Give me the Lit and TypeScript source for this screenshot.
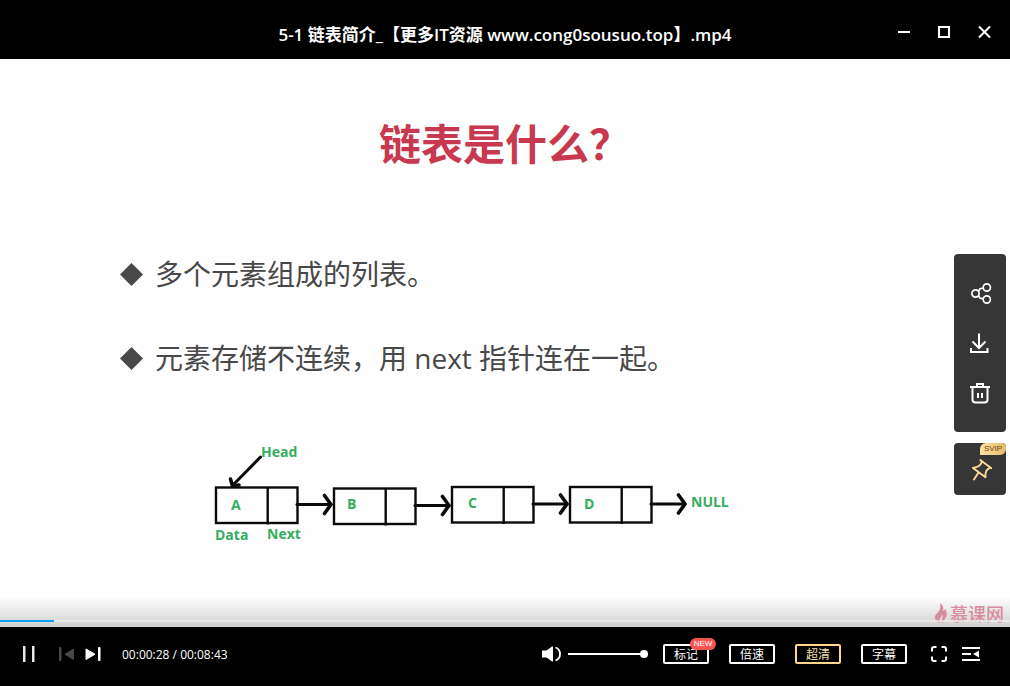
import { LitElement, html, css, svg } from "lit";
import { customElement, property, state } from "lit/decorators.js";

interface ListNode {
  label: string;
  x: number;
  y: number;
  labelX: number;
  labelY: number;
}

const NODES: ListNode[] = [
  { label: "A", x: 216, y: 487.5, labelX: 231, labelY: 510 },
  { label: "B", x: 334, y: 488.5, labelX: 347, labelY: 509 },
  { label: "C", x: 452, y: 487, labelX: 468, labelY: 508 },
  { label: "D", x: 570, y: 487, labelX: 584, labelY: 509 },
];

@customElement("linked-list-diagram")
class LinkedListDiagram extends LitElement {
  static styles = css`
    :host {
      display: block;
    }
    svg {
      display: block;
    }
    .line {
      fill: none;
      stroke: #0a0a0a;
      stroke-width: 2.4;
    }
    .arrow {
      fill: none;
      stroke: #0a0a0a;
      stroke-width: 3;
      stroke-linecap: round;
      stroke-linejoin: round;
    }
    .tip {
      stroke-width: 3.6;
    }
    text {
      font: 700 14px "Open Sans", "Noto Sans", sans-serif;
      fill: #34ad60;
    }
  `;

  render() {
    return html`
      <svg width="540" height="110" viewBox="200 440 540 110" role="img" aria-label="A → B → C → D → NULL">
        ${NODES.map(
          (n) => svg`
            <rect class="line" x=${n.x} y=${n.y} width="81.5" height="35.5" />
            <path class="line" d="M${n.x + 51.7} ${n.y}v37" />
            <path class="arrow" d="M${n.x + 81} ${n.y + 17}h34" />
            <path class="arrow tip" d="M${n.x + 108.5} ${n.y + 8}l6.500 9-6.500 9" />
            <text x=${n.labelX} y=${n.labelY}>${n.label}</text>
          `
        )}
        <path class="arrow" d="M260.500 457 234 484" />
        <path class="arrow tip" d="M230.500 479l2 7 6.500-1" />
        <text x="261" y="457">Head</text>
        <text x="215" y="540">Data</text>
        <text x="267" y="539">Next</text>
        <text x="691" y="507">NULL</text>
      </svg>
    `;
  }
}

@customElement("side-tools")
class SideTools extends LitElement {
  static styles = css`
    :host {
      display: flex;
      flex-direction: column;
      gap: 11px;
      width: 52px;
    }
    .group {
      display: flex;
      flex-direction: column;
      padding: 14px 0;
      border-radius: 4px;
      background: #363636;
    }
    button {
      display: grid;
      place-items: center;
      height: 50px;
      padding: 0;
      border: 0;
      background: none;
      color: #fff;
      cursor: pointer;
    }
    svg {
      display: block;
      fill: none;
      stroke: currentColor;
      stroke-width: 1.7;
    }
    .pin {
      position: relative;
      height: 52px;
      border-radius: 4px;
      background: #363636;
      color: #fddb96;
    }
    .svip {
      position: absolute;
      top: 0;
      right: 0;
      width: 26px;
      border-radius: 6px 4px 6px 0;
      background: linear-gradient(90deg, #fde3a6, #e8b968);
      color: #6b4312;
      font: 8px/12px "Liberation Sans", sans-serif;
      text-align: center;
    }
  `;

  render() {
    return html`
      <div class="group">
        <button aria-label="分享">
          <svg width="24" height="24" viewBox="0 0 24 24">
            <circle cx="7.500" cy="12.500" r="3.600" />
            <circle cx="18.800" cy="6.500" r="3.600" />
            <circle cx="18.800" cy="18.500" r="3.600" />
            <path d="M10.300 10.500 12 7.700l3.300-.700M10.300 14.500l1.700 2.600 3.300.700" />
          </svg>
        </button>
        <button aria-label="下载">
          <svg width="24" height="24" viewBox="0 0 24 24">
            <path stroke-width="2" d="M11 2.500v14M4.500 10.500l6.500 6.500 6.500-6.500M3 17v4h16.500v-4" />
          </svg>
        </button>
        <button aria-label="删除">
          <svg width="24" height="24" viewBox="0 0 24 24">
            <path stroke-width="2" d="M2 6h20M9 6V3h6v3M4.500 6v12.500a3 3 0 0 0 3 3h9a3 3 0 0 0 3-3V6M10 12v5M14 12v5" />
          </svg>
        </button>
      </div>
      <button class="pin" aria-label="置顶">
        <svg width="24" height="24" viewBox="0 0 24 24">
          <path stroke-width="1.900" d="m12.300 3 11 8.200M13.500 4.500c.300 3.500-3.500 5.500-8.500 6.500l12.500 9.300c-.500-4.500.500-8 4.500-9.500M10.500 15.500 6 22.500" stroke-linecap="round" stroke-linejoin="round" />
        </svg>
        <span class="svip">SVIP</span>
      </button>
    `;
  }
}

@customElement("app-root")
class AppRoot extends LitElement {
  @property({ type: Number }) duration = 523;
  @state() private position = 28;
  @state() private volume = 100;

  static styles = css`
    :host {
      display: flex;
      flex-direction: column;
      min-height: 100vh;
      background: #000;
      color: #fff;
      font: 12px/16px "Open Sans", "Noto Sans CJK SC", sans-serif;
    }
    button {
      display: grid;
      place-items: center;
      padding: 0;
      border: 0;
      background: none;
      color: inherit;
      font: inherit;
      cursor: pointer;
    }
    svg {
      display: block;
    }
    .titlebar {
      display: grid;
      grid-template-columns: 1fr auto 1fr;
      align-items: center;
      height: 59px;
      padding: 0 6px;
      box-sizing: border-box;
    }
    .name {
      grid-column: 2;
      margin: 0;
      padding-top: 11px;
      font-size: 17px;
      line-height: 24px;
      font-weight: 600;
      white-space: nowrap;
    }
    .window {
      display: flex;
      justify-content: flex-end;
      padding-top: 5px;
    }
    .window button {
      width: 40px;
      height: 24px;
    }
    .stage {
      position: relative;
      flex: 1;
      background: #fefefe;
      color: #484848;
    }
    .slide {
      padding-top: 57px;
    }
    .slide h2 {
      margin: 0;
      color: #c8384f;
      font-size: 42px;
      line-height: 56px;
      font-weight: 700;
      text-align: center;
    }
    .slide ul {
      margin: 60px 0 0;
      padding: 0 0 0 120px;
      list-style: none;
    }
    .slide li {
      display: flex;
      align-items: center;
      gap: 12px;
      font-size: 28px;
      line-height: 84px;
    }
    .slide li svg {
      flex: none;
    }
    linked-list-diagram {
      margin: 40px 0 0 200px;
    }
    side-tools {
      position: absolute;
      top: 195px;
      right: 4px;
    }
    .fade {
      position: absolute;
      left: 0;
      right: 0;
      bottom: 0;
      height: 30px;
      background: linear-gradient(rgba(0, 0, 0, 0), rgba(0, 0, 0, 0.18));
    }
    .watermark {
      position: absolute;
      right: 6px;
      bottom: 1px;
      display: flex;
      align-items: center;
      gap: 2px;
      color: #d78d9d;
      font-size: 18px;
      line-height: 24px;
      font-weight: 500;
    }
    input {
      display: block;
      margin: 0;
      appearance: none;
      cursor: pointer;
    }
    .seek {
      position: absolute;
      left: 0;
      bottom: 5px;
      width: 100%;
      height: 2px;
      background: linear-gradient(#0aa1f5, #0aa1f5) 0 0 / var(--played) 100% no-repeat rgba(240, 240, 240, 0.7);
    }
    .seek::-webkit-slider-thumb {
      appearance: none;
      width: 0;
      height: 2px;
    }
    .controls {
      display: flex;
      align-items: center;
      height: 59px;
      padding: 0 30px 5px 21px;
      box-sizing: border-box;
    }
    .transport {
      display: flex;
      align-items: center;
      flex: 1;
    }
    .pause {
      margin-right: 21px;
    }
    .prev {
      margin-right: 11px;
      color: #484848;
    }
    .time {
      margin-left: 21px;
      padding-top: 2px;
    }
    .volume {
      display: flex;
      align-items: center;
      gap: 6px;
      margin-right: 15px;
    }
    .level {
      width: 80px;
      height: 8px;
      background: linear-gradient(#fff, #fff) center / 100% 2px no-repeat;
    }
    .level::-webkit-slider-thumb {
      appearance: none;
      width: 8px;
      height: 8px;
      border-radius: 50%;
      background: #fff;
    }
    .options {
      display: flex;
      gap: 20px;
      margin-right: 23px;
    }
    .option {
      position: relative;
      box-sizing: border-box;
      width: 46px;
      height: 20px;
      padding-top: 1px;
      border: 2px solid #fff;
      border-radius: 2px;
    }
    .gold {
      border-color: #fdd78c;
      color: #fbe3ac;
    }
    .new {
      position: absolute;
      top: -8px;
      right: -9px;
      width: 26px;
      border-radius: 6px;
      background: #fb5450;
      color: #fff;
      font: 8px/12px "Liberation Sans", sans-serif;
      text-align: center;
    }
    .screen {
      display: flex;
      align-items: center;
      gap: 14px;
    }
  `;

  private clock(total: number) {
    return [Math.floor(total / 3600), Math.floor(total / 60) % 60, total % 60]
      .map((n) => String(n).padStart(2, "0"))
      .join(":");
  }

  private diamond() {
    return html`<svg width="23" height="23" viewBox="0 0 23 23"><path fill="currentColor" d="M11.500 0 23 11.500 11.500 23 0 11.500z" /></svg>`;
  }

  render() {
    return html`
      <header class="titlebar">
        <h1 class="name">5-1 链表简介_【更多IT资源 www.cong0sousuo.top】.mp4</h1>
        <div class="window">
          <button aria-label="最小化">
            <svg width="14" height="14" viewBox="0 0 14 14"><path fill="#fff" d="M1 6h12v2H1z" /></svg>
          </button>
          <button aria-label="最大化">
            <svg width="14" height="14" viewBox="0 0 14 14"><path fill="none" stroke="#fff" stroke-width="2" d="M2 2h10v10H2z" /></svg>
          </button>
          <button aria-label="关闭">
            <svg width="14" height="14" viewBox="0 0 14 14"><path stroke="#fff" stroke-width="2" d="m2 1.500 11 11m0-11-11 11" /></svg>
          </button>
        </div>
      </header>

      <main class="stage">
        <section class="slide">
          <h2>链表是什么？</h2>
          <ul>
            <li>${this.diamond()}多个元素组成的列表。</li>
            <li>${this.diamond()}元素存储不连续，用 next 指针连在一起。</li>
          </ul>
          <linked-list-diagram></linked-list-diagram>
        </section>
        <div class="fade"></div>
        <div class="watermark">
          <svg width="14" height="24" viewBox="0 0 14 24">
            <path fill="currentColor" d="M6.500 1c2.500 2.500 3.500 5 2.500 8 1.500-.200 2-1.200 2-2.500 2.500 4 2.500 8-.500 11-1 .900-1 2-1.500 4.500-1.500-2-1.500-4-.500-6 .500-1.500.300-2.500-.500-3.500-.300 2.500-2.500 3.500-2.500 6.500 0 .700.200 1.500.500 2C2.500 20 .500 17 1 14.500c.700-3 4.500-4.500 5-8C6.500 4.500 6 3 6.500 1z" />
          </svg>
          <span>慕课网</span>
        </div>
        <side-tools></side-tools>
        <input
          class="seek"
          type="range"
          aria-label="播放进度"
          min="0"
          .max=${String(this.duration)}
          .value=${String(this.position)}
          style="--played: ${(this.position / this.duration) * 100}%"
          @input=${(e: Event) => (this.position = Number((e.target as HTMLInputElement).value))}
        />
      </main>

      <footer class="controls">
        <div class="transport">
          <button class="pause" aria-label="暂停">
            <svg width="16" height="18" viewBox="0 0 16 18"><path fill="#e8e8e8" d="M2 1h2.500v16H2zM11 1h2.500v16H11z" /></svg>
          </button>
          <button class="prev" aria-label="上一个">
            <svg width="16" height="16" viewBox="0 0 16 16">
              <path fill="currentColor" stroke="currentColor" stroke-linejoin="round" d="M1.500 1.500h1.500v13H1.500zM15.500 3v10.500L7 8.200z" />
            </svg>
          </button>
          <button aria-label="下一个">
            <svg width="16" height="16" viewBox="0 0 16 16">
              <path fill="currentColor" stroke="currentColor" stroke-linejoin="round" d="M13.500 1.500H15v13h-1.500zM1 3v10.500l9-5.300z" />
            </svg>
          </button>
          <span class="time">${this.clock(this.position)} / ${this.clock(this.duration)}</span>
        </div>
        <div class="volume">
          <button aria-label="静音">
            <svg width="21" height="18" viewBox="0 0 21 18">
              <path fill="#fff" d="M1 5.500h4.500L11 1.500h1v15h-1L5.500 12.500H1z" />
              <path fill="none" stroke="#fff" stroke-width="1.800" d="M14.500 2.500c6 2 6 11 0 13" />
            </svg>
          </button>
          <input
            class="level"
            type="range"
            aria-label="音量"
            min="0"
            max="100"
            .value=${String(this.volume)}
            @input=${(e: Event) => (this.volume = Number((e.target as HTMLInputElement).value))}
          />
        </div>
        <div class="options">
          <button class="option">标记<span class="new">NEW</span></button>
          <button class="option">倍速</button>
          <button class="option gold">超清</button>
          <button class="option">字幕</button>
        </div>
        <div class="screen">
          <button aria-label="全屏">
            <svg width="18" height="18" viewBox="0 0 18 18">
              <path fill="none" stroke="#fff" stroke-width="2" d="M6.500 2H4a2 2 0 0 0-2 2v2.500M11.500 2H14a2 2 0 0 1 2 2v2.500M6.500 16H4a2 2 0 0 1-2-2v-2.500M11.500 16H14a2 2 0 0 0 2-2v-2.500" />
            </svg>
          </button>
          <button aria-label="播放列表">
            <svg width="18" height="16" viewBox="0 0 18 16">
              <path fill="#fff" d="M0 1h18v2H0zM0 7h9v2H0zM0 13h18v2H0zM17 4.500v7L11 8z" />
            </svg>
          </button>
        </div>
      </footer>
    `;
  }
}
